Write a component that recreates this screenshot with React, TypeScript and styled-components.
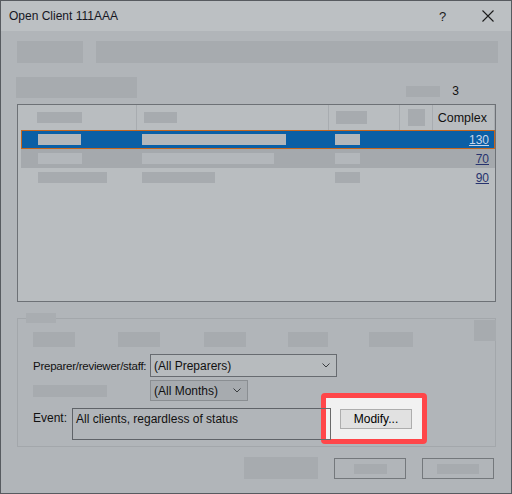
import React from 'react';
import styled, { createGlobalStyle } from 'styled-components';

const GlobalStyle = createGlobalStyle`
  body {
    margin: 0;
    font-family: "Liberation Sans", Arial, sans-serif;
    font-size: 12px;
    color: #111;
  }
`;

interface ClientRow {
  id: number;
  widths: [number, number, number];
  complex: string;
  selected?: boolean;
  shaded?: boolean;
}

const rows: ClientRow[] = [
  { id: 1, widths: [43, 144, 25], complex: '130', selected: true },
  { id: 2, widths: [44, 132, 25], complex: '70', shaded: true },
  { id: 3, widths: [69, 73, 25], complex: '90' },
];

const App = () => {
  return (
    <>
      <GlobalStyle />
      <Window>
        <TitleBar>
          <Title>Open Client 111AAA</Title>
          <Help>?</Help>
          <Close>
            <svg width="12" height="12" viewBox="0 0 12 12">
              <path d="M0.5 0.5 L11.5 11.5 M11.5 0.5 L0.5 11.5" stroke="#1b1b1b" strokeWidth="1.1" />
            </svg>
          </Close>
        </TitleBar>

        <Body>
          <TopRow>
            <Block $w={66} $h={22} />
            <Block $grow $h={22} />
          </TopRow>

          <CountRow>
            <Block $w={121} $h={21} />
            <Count>
              <Block $w={34} $h={11} />
              <span>3</span>
            </Count>
          </CountRow>

          <List>
            <HeaderRow>
              <HeaderCell $pad={19}>
                <Block $w={45} $h={11} />
              </HeaderCell>
              <HeaderCell $pad={7}>
                <Block $w={33} $h={11} />
              </HeaderCell>
              <HeaderCell $pad={7}>
                <Block $w={31} $h={13} />
              </HeaderCell>
              <HeaderCell $pad={8}>
                <Block $w={17} $h={17} />
              </HeaderCell>
              <HeaderCell $pad={0} $right>
                Complex
              </HeaderCell>
            </HeaderRow>
            {rows.map(row => (
              <DataRow key={row.id} $selected={row.selected} $shaded={row.shaded}>
                <Cell $pad={16}>
                  <RowBlock $w={row.widths[0]} $light={row.selected || row.shaded} />
                </Cell>
                <Cell $pad={4}>
                  <RowBlock $w={row.widths[1]} $light={row.selected || row.shaded} />
                </Cell>
                <Cell $pad={5}>
                  <RowBlock $w={row.widths[2]} $light={row.selected || row.shaded} />
                </Cell>
                <Cell $pad={0} />
                <LinkCell $selected={row.selected}>{row.complex}</LinkCell>
              </DataRow>
            ))}
          </List>

          <Group>
            <Legend />
            <PlaceholderRow>
              <Block $w={42} $h={15} />
              <Block $w={42} $h={15} $ml={43} />
              <Block $w={42} $h={15} $ml={44} />
              <Block $w={40} $h={15} $ml={42} />
              <Block $w={44} $h={15} $ml={41} />
              <Corner />
            </PlaceholderRow>

            <FieldRow $mt={7}>
              <Label>Preparer/reviewer/staff:</Label>
              <Combo $w={187} $h={23}>
                (All Preparers)
                <Chevron />
              </Combo>
            </FieldRow>

            <FieldRow $mt={3}>
              <LabelSlot>
                <Block $w={74} $h={12} />
              </LabelSlot>
              <Combo $w={98} $h={21} $dark>
                (All Months)
                <Chevron />
              </Combo>
            </FieldRow>

            <EventRow>
              <EventLabel>Event:</EventLabel>
              <EventBox>All clients, regardless of status</EventBox>
              <Spotlight>
                <Peek />
                <ModifyButton>Modify...</ModifyButton>
              </Spotlight>
            </EventRow>
          </Group>

          <Footer>
            <Block $w={74} $h={22} />
            <GhostButton>
              <Block $w={33} $h={10} />
            </GhostButton>
            <GhostButton>
              <Block $w={42} $h={10} />
            </GhostButton>
          </Footer>
        </Body>
      </Window>
    </>
  );
};

export default App;

const Window = styled.div`
  width: 512px;
  height: 494px;
  box-sizing: border-box;
  border: 1px solid #575b60;
  background: #b1b5b9;
  display: flex;
  flex-direction: column;
`;

const TitleBar = styled.div`
  height: 30px;
  background: #bcc0c3;
  display: flex;
  align-items: center;
  padding: 0 0 0 8px;
`;

const Title = styled.div`
  flex: 1;
  color: #16161f;
`;

const Help = styled.div`
  width: 14px;
  margin-right: 29px;
  font-size: 13px;
  color: #1b1b1b;
`;

const Close = styled.div`
  width: 12px;
  height: 12px;
  margin-right: 17px;
  display: flex;
`;

const Body = styled.div`
  padding: 10px 15px 0 15px;
  display: flex;
  flex-direction: column;
`;

const Block = styled.div<{ $w?: number; $h: number; $grow?: boolean; $ml?: number }>`
  background: #a7abaf;
  height: ${p => p.$h}px;
  width: ${p => (p.$w ? `${p.$w}px` : 'auto')};
  flex: ${p => (p.$grow ? 1 : 'none')};
  margin-left: ${p => p.$ml ?? 0}px;
`;

const TopRow = styled.div`
  display: flex;
  gap: 13px;
  padding-left: 1px;
  margin-right: -2px;
`;

const CountRow = styled.div`
  display: flex;
  align-items: flex-end;
  margin-top: 14px;
`;

const Count = styled.div`
  margin-left: auto;
  margin-right: 37px;
  display: flex;
  align-items: center;
  gap: 12px;
  line-height: 14px;
  color: #111;
  ${Block} {
    margin-top: 1px;
  }
`;

const List = styled.div`
  margin-top: 6px;
  margin-left: 1px;
  height: 198px;
  box-sizing: border-box;
  border: 1px solid #6d7176;
  background: #b9bdc0;
`;

const columns = '119px 192px 71px 33px 62px';

const HeaderRow = styled.div`
  display: grid;
  grid-template-columns: ${columns};
  height: 25px;
`;

const HeaderCell = styled.div<{ $pad: number; $right?: boolean }>`
  display: flex;
  align-items: center;
  justify-content: ${p => (p.$right ? 'flex-end' : 'flex-start')};
  padding-left: ${p => p.$pad}px;
  padding-right: ${p => (p.$right ? 7 : 0)}px;
  border-right: 1px solid #a8acb0;
  color: #111;
  font-size: 12.5px;
`;

const DataRow = styled.div<{ $selected?: boolean; $shaded?: boolean }>`
  display: grid;
  grid-template-columns: 116px 192px 71px 33px 62px;
  height: 19px;
  margin-left: 3px;
  box-sizing: border-box;
  border: 1px solid ${p => (p.$selected ? '#c4661f' : 'transparent')};
  background: ${p => (p.$selected ? '#0b5fa5' : p.$shaded ? '#a5a9ad' : 'transparent')};
`;

const Cell = styled.div<{ $pad: number }>`
  display: flex;
  align-items: center;
  padding-left: ${p => p.$pad}px;
`;

const RowBlock = styled.div<{ $w: number; $light?: boolean }>`
  width: ${p => p.$w}px;
  height: 11px;
  background: ${p => (p.$light ? '#b3b7bb' : '#a7abaf')};
`;

const LinkCell = styled.div<{ $selected?: boolean }>`
  display: flex;
  align-items: center;
  justify-content: flex-end;
  padding-right: 7px;
  text-decoration: underline;
  color: ${p => (p.$selected ? '#c9d6ea' : '#27336e')};
`;

const Group = styled.div`
  position: relative;
  margin-top: 16px;
  margin-left: 1px;
  border: 1px solid #a3a7ab;
  padding: 13px 0 2px 15px;
`;

const Legend = styled.div`
  position: absolute;
  top: -6px;
  left: 8px;
  width: 30px;
  height: 10px;
  background: #a9adb1;
`;

const PlaceholderRow = styled.div`
  display: flex;
  align-items: flex-start;
  height: 15px;
`;

const Corner = styled.div`
  margin-left: auto;
  margin-top: -12px;
  margin-right: -1px;
  width: 22px;
  height: 21px;
  background: #a7abaf;
`;

const FieldRow = styled.div<{ $mt: number }>`
  display: flex;
  align-items: center;
  margin-top: ${p => p.$mt}px;
`;

const Label = styled.div`
  width: 117px;
  white-space: nowrap;
  font-size: 11.5px;
  letter-spacing: -0.25px;
  color: #111;
`;

const LabelSlot = styled.div`
  width: 117px;
  display: flex;
`;

const Combo = styled.div<{ $w: number; $h: number; $dark?: boolean }>`
  width: ${p => p.$w}px;
  height: ${p => p.$h}px;
  box-sizing: border-box;
  border: 1px solid ${p => (p.$dark ? '#8a8e92' : '#676b70')};
  background: ${p => (p.$dark ? '#a7abaf' : '#b7bbbe')};
  display: flex;
  align-items: center;
  justify-content: space-between;
  padding: 0 6px 0 3px;
  color: #111;
`;

const ChevronSvg = styled.svg`
  flex: none;
`;

const Chevron = () => (
  <ChevronSvg width="8" height="5" viewBox="0 0 8 5">
    <path d="M0.5 0.5 L4 4 L7.5 0.5" fill="none" stroke="#3a3d40" strokeWidth="1" />
  </ChevronSvg>
);

const EventRow = styled.div`
  display: flex;
  align-items: flex-start;
  margin-top: 7px;
`;

const EventLabel = styled.div`
  width: 39px;
  padding-top: 3px;
  color: #111;
`;

const EventBox = styled.div`
  width: 260px;
  height: 32px;
  box-sizing: border-box;
  border: 1px solid #5f6368;
  padding: 3px 3px;
  color: #111;
`;

const Spotlight = styled.div`
  position: relative;
  margin-left: -11px;
  margin-top: -15px;
  width: 106px;
  height: 51px;
  box-sizing: border-box;
  border: 5px solid #ff4649;
  border-radius: 4px;
  background: #f1f1f1;
  padding: 11px 0 0 14px;
`;

const Peek = styled.div`
  position: absolute;
  left: -5px;
  top: 10px;
  width: 10px;
  height: 32px;
  box-sizing: border-box;
  border: 1px solid #6a6a6a;
  border-left: none;
`;

const ModifyButton = styled.div`
  width: 72px;
  height: 20px;
  box-sizing: border-box;
  border: 1px solid #adadad;
  background: #e1e1e1;
  display: flex;
  align-items: center;
  justify-content: center;
  color: #000;
`;

const Footer = styled.div`
  display: flex;
  align-items: flex-start;
  margin-top: 10px;
  padding-left: 228px;
  gap: 16px;
`;

const GhostButton = styled.div`
  width: 72px;
  height: 21px;
  box-sizing: border-box;
  border: 1px solid #74787c;
  margin-top: 1px;
  display: flex;
  align-items: center;
  justify-content: center;
`;
